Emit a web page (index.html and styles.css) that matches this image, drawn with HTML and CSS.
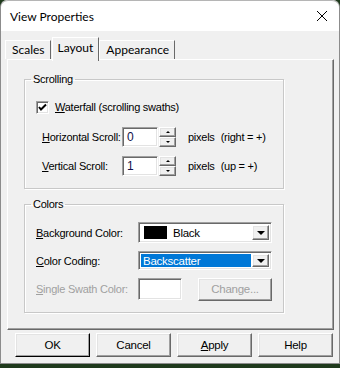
FILE: index.html
```html
<!DOCTYPE html>
<html lang="en">
  <head>
    <meta charset="UTF-8" />
    <title>View Properties</title>
    <link rel="stylesheet" href="styles.css">
  </head>
  <body>
    <div class="window">
      <div class="titlebar">
        <span class="title">View Properties</span>
        <svg class="close" width="12" height="12" viewBox="0 0 12 12">
          <path d="M1 1 L11 11 M11 1 L1 11" stroke="#000" stroke-width="1" fill="none" />
        </svg>
      </div>
      <div class="client">
        <div class="tabs">
          <div class="tab">Scales</div>
          <div class="tab active">Layout</div>
          <div class="tab">Appearance</div>
        </div>
        <div class="panel">
          <fieldset class="group scrolling">
            <legend>Scrolling</legend>
            <div class="check-row">
              <span class="checkbox">
                <svg width="9" height="9" viewBox="0 0 9 9">
                  <path d="M1 4 L3 6.5 L8 1.5" stroke="#000" stroke-width="2" fill="none" />
                </svg>
              </span>
              <span><u>W</u>aterfall (scrolling swaths)</span>
            </div>
            <div class="spin-row first">
              <span class="spin-label"><u>H</u>orizontal Scroll:</span>
              <span class="field">0</span>
              <span class="spinner">
                <span class="spin-btn"><span class="tri up"></span></span>
                <span class="spin-btn"><span class="tri down"></span></span>
              </span>
              <span class="unit">pixels</span>
              <span class="hint">(right = +)</span>
            </div>
            <div class="spin-row">
              <span class="spin-label"><u>V</u>ertical Scroll:</span>
              <span class="field">1</span>
              <span class="spinner">
                <span class="spin-btn"><span class="tri up"></span></span>
                <span class="spin-btn"><span class="tri down"></span></span>
              </span>
              <span class="unit">pixels</span>
              <span class="hint">(up = +)</span>
            </div>
          </fieldset>

          <fieldset class="group colors">
            <legend>Colors</legend>
            <div class="color-row bg-row">
              <span class="color-label"><u>B</u>ackground Color:</span>
              <span class="combo">
                <span class="combo-value"><span class="swatch"></span>Black</span>
                <span class="drop-btn"><span class="tri down big"></span></span>
              </span>
            </div>
            <div class="color-row coding-row">
              <span class="color-label"><u>C</u>olor Coding:</span>
              <span class="combo">
                <span class="combo-value selected">Backscatter</span>
                <span class="drop-btn"><span class="tri down big"></span></span>
              </span>
            </div>
            <div class="color-row swath-row">
              <span class="color-label disabled"><u>S</u>ingle Swath Color:</span>
              <span class="swath-box"></span>
              <span class="btn change disabled">Change...</span>
            </div>
          </fieldset>
        </div>
        <div class="buttons">
          <span class="btn default">OK</span>
          <span class="btn">Cancel</span>
          <span class="btn"><u>A</u>pply</span>
          <span class="btn">Help</span>
        </div>
      </div>
    </div>
  </body>
</html>
```

FILE: styles.css
```css
html {
  height: 100%;
}

body {
  margin: 0;
  background: #1f3a1c;
  font-family: "Liberation Sans", Arial, sans-serif;
  font-size: 11px;
  letter-spacing: -0.25px;
  color: #000;
  white-space: nowrap;
}

.window {
  width: 338px;
  height: 363px;
  background: #f0f0f0;
  border: 1px solid #8c8c8c;
  border-top: none;
  border-radius: 7px 7px 0 0;
  overflow: hidden;
}

.titlebar {
  display: flex;
  align-items: center;
  justify-content: space-between;
  height: 31px;
  padding: 0 11px 0 9px;
  background: #fff;
  border-top: 1px solid #b5b5b5;
  border-radius: 7px 7px 0 0;
  box-sizing: border-box;
}

.title {
  font-family: Lato, sans-serif;
  font-size: 12px;
  letter-spacing: 0;
  padding-top: 1px;
}

.client {
  padding: 6px 5px 0 6px;
}

/* tabs */
.tabs {
  display: flex;
  align-items: flex-end;
  height: 22px;
  margin-left: -2px;
  font-family: Lato, sans-serif;
  font-size: 12px;
  letter-spacing: 0;
}

.tab {
  height: 19px;
  padding: 0 5px 0 6px;
  line-height: 18px;
  border: 1px solid #fff;
  border-bottom: none;
  border-right-color: #696969;
  box-sizing: border-box;
}

.tab.active {
  position: relative;
  z-index: 1;
  height: 24px;
  margin-bottom: -2px;
  margin-left: 1px;
  padding: 0 5px;
  line-height: 20px;
  background: #f0f0f0;
}

.panel {
  width: 327px;
  height: 271px;
  padding: 0 0 0 16px;
  border: 1px solid #fff;
  border-right-color: #696969;
  border-bottom-color: #696969;
  box-shadow: inset -1px -1px 0 #a0a0a0;
  box-sizing: border-box;
}

/* group boxes */
.group {
  width: 260px;
  margin: 13px 0 0;
  padding: 0 0 0 11px;
  border: 1px solid #c8c8c8;
  box-shadow: inset 1px 1px 0 #fff, 1px 1px 0 #fff;
  box-sizing: border-box;
}

.group legend {
  margin-left: -5px;
  padding: 0 2px;
  line-height: 13px;
}

.scrolling {
  height: 116px;
}

.colors {
  height: 115px;
  margin-top: 9px;
}

.check-row {
  display: flex;
  align-items: center;
  gap: 6px;
  margin-top: 14px;
  height: 14px;
}

.checkbox {
  display: flex;
  align-items: center;
  justify-content: center;
  width: 13px;
  height: 13px;
  background: #fff;
  border: 1px solid;
  border-color: #a0a0a0 #fff #fff #a0a0a0;
  box-shadow: inset 1px 1px 0 #696969, inset -1px -1px 0 #e3e3e3;
  box-sizing: border-box;
}

.spin-row {
  display: flex;
  align-items: center;
  height: 20px;
  margin-top: 9px;
  padding-left: 6px;
}

.spin-row.first {
  margin-top: 13px;
}

.spin-label {
  width: 80px;
}

.field,
.combo,
.swath-box {
  background: #fff;
  border: 1px solid;
  border-color: #a0a0a0 #fff #fff #a0a0a0;
  box-shadow: inset 1px 1px 0 #696969, inset -1px -1px 0 #e3e3e3;
  box-sizing: border-box;
}

.field {
  width: 36px;
  height: 20px;
  padding: 2px 0 0 4px;
  font-size: 12px;
  color: #10104a;
}

.spinner {
  display: flex;
  flex-direction: column;
  margin-left: 1px;
}

.spin-btn,
.drop-btn,
.btn {
  display: flex;
  align-items: center;
  justify-content: center;
  background: #f0f0f0;
  border: 1px solid;
  border-color: #fff #696969 #696969 #fff;
  box-shadow: inset -1px -1px 0 #a0a0a0, inset 1px 1px 0 #e3e3e3;
  box-sizing: border-box;
}

.spin-btn {
  width: 17px;
  height: 10px;
}

.tri {
  width: 0;
  height: 0;
  border-left: 2px solid transparent;
  border-right: 2px solid transparent;
}

.tri.up {
  border-bottom: 2px solid #000;
}

.tri.down {
  border-top: 2px solid #000;
}

.tri.big {
  border-left-width: 4px;
  border-right-width: 4px;
  border-top-width: 4px;
}

.unit {
  margin-left: 12px;
}

.hint {
  margin-left: 6px;
}

/* colors */
.color-row {
  display: flex;
  align-items: center;
}

.color-label {
  width: 102px;
}

.color-label.disabled,
.btn.disabled {
  color: #a0a0a0;
}

.bg-row {
  height: 21px;
  margin-top: 11px;
}

.coding-row {
  height: 19px;
  margin-top: 8px;
}

.swath-row {
  height: 22px;
  margin-top: 8px;
}

.combo {
  display: flex;
  align-items: center;
  justify-content: space-between;
  width: 134px;
  height: 100%;
  padding: 2px;
}

.combo-value {
  display: flex;
  align-items: center;
  flex: 1;
  height: 100%;
  font-size: 11.5px;
}

.combo-value.selected {
  padding-left: 2px;
  background: #0078d7;
  color: #fff;
}

.swatch {
  width: 23px;
  height: 13px;
  margin: 0 6px 0 3px;
  background: #000;
}

.drop-btn {
  width: 17px;
  height: 100%;
  margin-left: 1px;
}

.swath-box {
  width: 44px;
  height: 100%;
}

.btn.change {
  width: 74px;
  height: 23px;
  margin-left: 16px;
  font-size: 11.5px;
}

/* bottom buttons */
.buttons {
  display: flex;
  gap: 6px;
  margin-top: 3px;
  padding-left: 8px;
}

.buttons .btn {
  width: 75px;
  height: 24px;
  font-size: 11.5px;
}

.btn.default {
  border-color: #fff #000 #000 #fff;
}
```
